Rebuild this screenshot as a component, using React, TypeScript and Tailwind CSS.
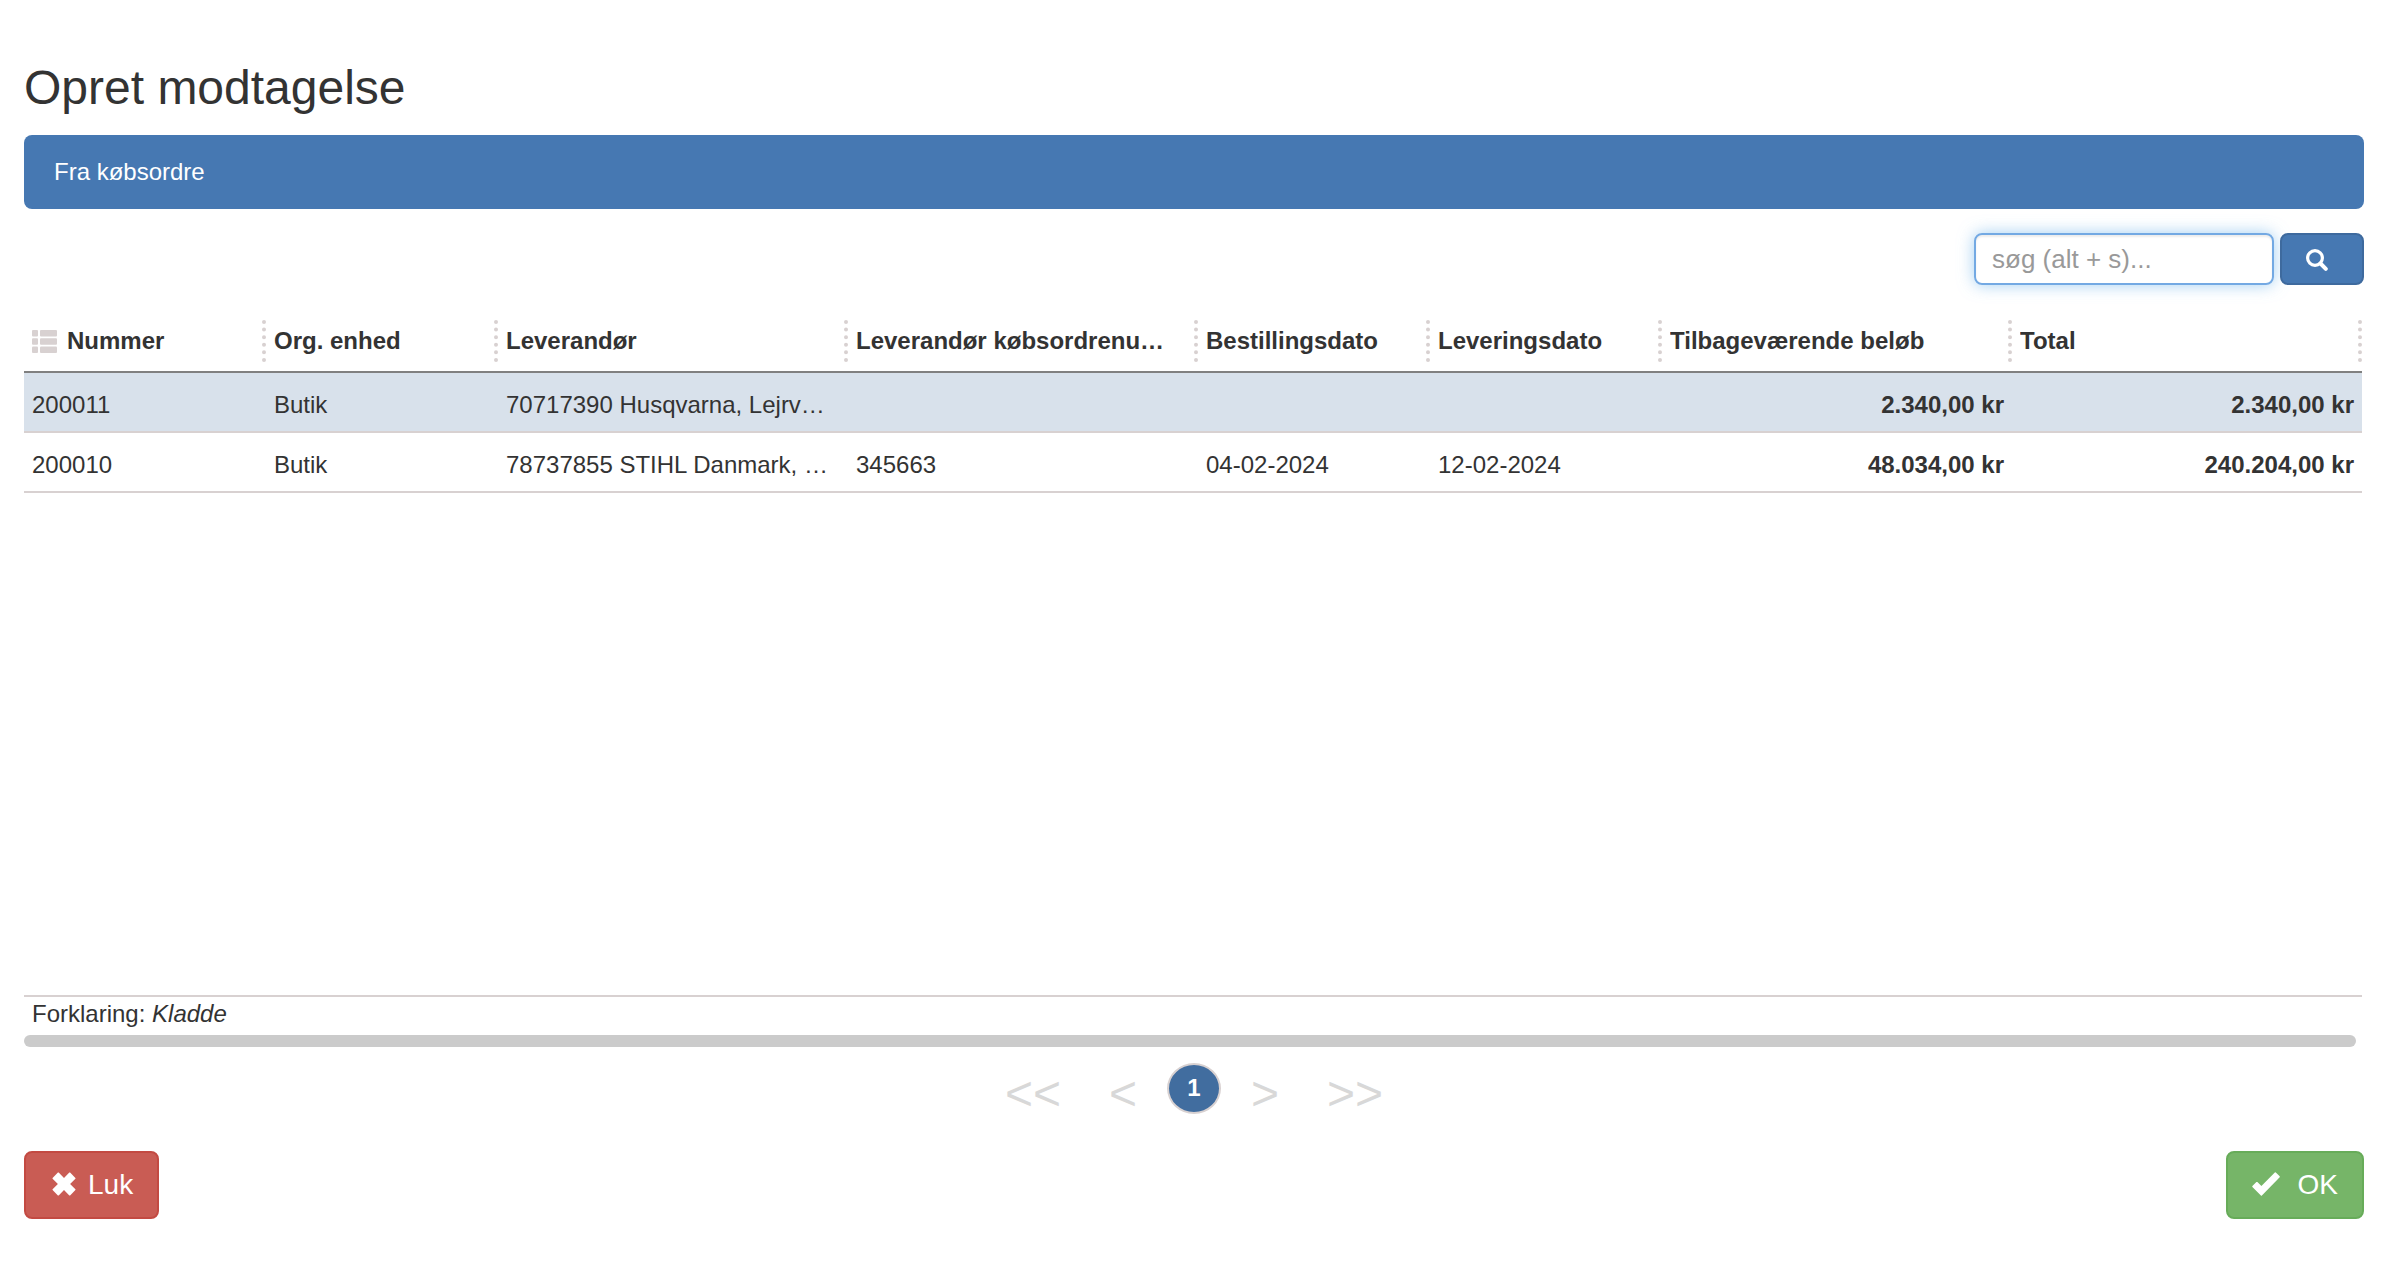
import { useState } from 'react';

interface Column {
  key: keyof Order;
  label: string;
  width: number;
  numeric?: boolean;
}

interface Order {
  number: string;
  unit: string;
  supplier: string;
  supplierOrder: string;
  ordered: string;
  delivery: string;
  remaining: string;
  total: string;
}

const columns: Column[] = [
  { key: 'number', label: 'Nummer', width: 242 },
  { key: 'unit', label: 'Org. enhed', width: 232 },
  { key: 'supplier', label: 'Leverandør', width: 350 },
  { key: 'supplierOrder', label: 'Leverandør købsordrenu…', width: 350 },
  { key: 'ordered', label: 'Bestillingsdato', width: 232 },
  { key: 'delivery', label: 'Leveringsdato', width: 232 },
  { key: 'remaining', label: 'Tilbageværende beløb', width: 350, numeric: true },
  { key: 'total', label: 'Total', width: 350, numeric: true },
];

const orders: Order[] = [
  {
    number: '200011',
    unit: 'Butik',
    supplier: '70717390 Husqvarna, Lejrv…',
    supplierOrder: '',
    ordered: '',
    delivery: '',
    remaining: '2.340,00 kr',
    total: '2.340,00 kr',
  },
  {
    number: '200010',
    unit: 'Butik',
    supplier: '78737855 STIHL Danmark, …',
    supplierOrder: '345663',
    ordered: '04-02-2024',
    delivery: '12-02-2024',
    remaining: '48.034,00 kr',
    total: '240.204,00 kr',
  },
];

function ListIcon() {
  return (
    <svg viewBox="0 0 25 23" className="h-[23px] w-[25px] shrink-0 fill-[#d8d1d1]" aria-hidden="true">
      {[0, 8.3, 16.6].map(y => (
        <g key={y}>
          <rect x="0" y={y} width="6" height="6.4" rx="1" />
          <rect x="8" y={y} width="17" height="6.4" rx="1" />
        </g>
      ))}
    </svg>
  );
}

function SearchIcon() {
  return (
    <svg viewBox="0 0 22 22" className="h-[22px] w-[22px]" fill="none" stroke="white" aria-hidden="true">
      <circle cx="9" cy="9" r="7.4" strokeWidth="3.2" />
      <path d="M14.5 14.5 L19.8 19.8" strokeWidth="4" strokeLinecap="round" />
    </svg>
  );
}

function RemoveIcon() {
  return (
    <svg viewBox="0 0 24 24" className="mb-0.5 h-6 w-6" fill="white" aria-hidden="true">
      <path d="M5.9 0.6 Q6.3 0.3 6.7 0.6 L12 5.9 L17.3 0.6 Q17.7 0.3 18.1 0.6 L23.4 5.9 Q23.7 6.3 23.4 6.7 L18.1 12 L23.4 17.3 Q23.7 17.7 23.4 18.1 L18.1 23.4 Q17.7 23.7 17.3 23.4 L12 18.1 L6.7 23.4 Q6.3 23.7 5.9 23.4 L0.6 18.1 Q0.3 17.7 0.6 17.3 L5.9 12 L0.6 6.7 Q0.3 6.3 0.6 5.9 Z" />
    </svg>
  );
}

function OkIcon() {
  return (
    <svg viewBox="0 0 28 24" className="mb-0.5 h-6 w-7" fill="white" aria-hidden="true">
      <path d="M22.8 0.4 Q23.3 0 23.8 0.4 L27.7 4.3 Q28 4.8 27.7 5.2 L9.9 23.5 Q9.4 24 8.9 23.5 L0.4 15 Q0 14.5 0.4 14 L4.4 10.1 Q4.9 9.7 5.4 10.1 L9.4 13.9 Z" />
    </svg>
  );
}

export default function App() {
  const [query, setQuery] = useState('');
  const [selected, setSelected] = useState('200011');

  return (
    <main className="bg-white pt-16 pr-[22px] pl-6 font-['Liberation_Sans',Arial,sans-serif] text-2xl text-[#333]">
      <h1 className="text-5xl leading-[48px]">Opret modtagelse</h1>

      <div className="mt-[23px] rounded-lg bg-[#4678b2] px-[30px] py-5 leading-[34px] text-white">Fra købsordre</div>

      <form className="mt-6 flex justify-end gap-1.5" onSubmit={e => e.preventDefault()}>
        <input
          type="text"
          aria-label="søg"
          placeholder="søg (alt + s)..."
          value={query}
          onChange={e => setQuery(e.target.value)}
          className="h-[52px] w-[300px] rounded-lg border-2 border-[#73a9e3] px-4 text-[26px] shadow-[0_0_16px_rgba(102,175,233,0.6),inset_0_2px_2px_rgba(0,0,0,0.075)] outline-none placeholder:text-[#999]"
        />
        <button
          type="submit"
          aria-label="Søg"
          className="flex h-[52px] w-[84px] items-center rounded-lg border-2 border-[#3e6a9e] bg-[#4678b2] pt-0.5 pl-6"
        >
          <SearchIcon />
        </button>
      </form>

      {/* Order list */}
      <div className="mt-[26px] mr-0.5 min-h-[684px]">
        <table className="w-full table-fixed border-collapse">
          <colgroup>
            {columns.map(col => (
              <col key={col.key} style={{ width: col.width }} />
            ))}
          </colgroup>
          <thead>
            <tr className="border-b-2 border-[#808080]">
              {columns.map((col, i) => (
                <th key={col.key} className="p-0 pl-2 text-left font-bold">
                  <div className="flex h-[60px] items-center gap-2.5">
                    {i === 0 && <ListIcon />}
                    <span className="min-w-0 flex-1 truncate">{col.label}</span>
                    <span className="h-[42px] shrink-0 border-r-4 border-dotted border-[#d8d1d1]" />
                  </div>
                </th>
              ))}
            </tr>
          </thead>
          <tbody>
            {orders.map(order => (
              <tr
                key={order.number}
                onClick={() => setSelected(order.number)}
                className={`h-[60px] border-b-2 border-[#d8d1d1] ${selected === order.number ? 'bg-[#d8e1eb]' : ''}`}
              >
                {columns.map(col => (
                  <td key={col.key} className={`truncate px-2 pt-1.5 ${col.numeric ? 'text-right font-bold' : ''}`}>
                    {order[col.key]}
                  </td>
                ))}
              </tr>
            ))}
          </tbody>
        </table>
      </div>

      <div className="mr-0.5 border-t-2 border-[#d8d1d1] px-2 leading-[34px]">
        Forklaring: <em>Kladde</em>
      </div>
      <div className="mt-1 mr-2 h-3 rounded-full bg-[#cbcbcb]" />

      {/* Paging */}
      <nav className="mt-4 flex h-[51px] items-center justify-center text-5xl leading-[48px] text-[#d8d8d8]">
        <button type="button" aria-label="Første side" className="mr-12 pt-2.5">&lt;&lt;</button>
        <button type="button" aria-label="Forrige side" className="mr-[30px] pt-2.5">&lt;</button>
        <button
          type="button"
          aria-current="page"
          className="h-[51px] w-[54px] rounded-[50%] border-2 border-[#d8d1d1] bg-[#416d9f] pb-0.5 text-2xl font-bold text-white"
        >
          1
        </button>
        <button type="button" aria-label="Næste side" className="ml-[30px] pt-2.5">&gt;</button>
        <button type="button" aria-label="Sidste side" className="ml-12 pt-2.5">&gt;&gt;</button>
      </nav>

      <div className="mt-[37px] flex justify-between pb-12 text-[28px] text-white">
        <button
          type="button"
          className="flex h-[68px] items-center gap-3 rounded-lg border-2 border-[#c34a42] bg-[#c95c54] pr-6 pl-[26px]"
        >
          <RemoveIcon />
          Luk
        </button>
        <button
          type="button"
          className="flex h-[68px] items-center gap-[18px] rounded-lg border-2 border-[#67ac59] bg-[#76b568] px-6"
        >
          <OkIcon />
          OK
        </button>
      </div>
    </main>
  );
}
